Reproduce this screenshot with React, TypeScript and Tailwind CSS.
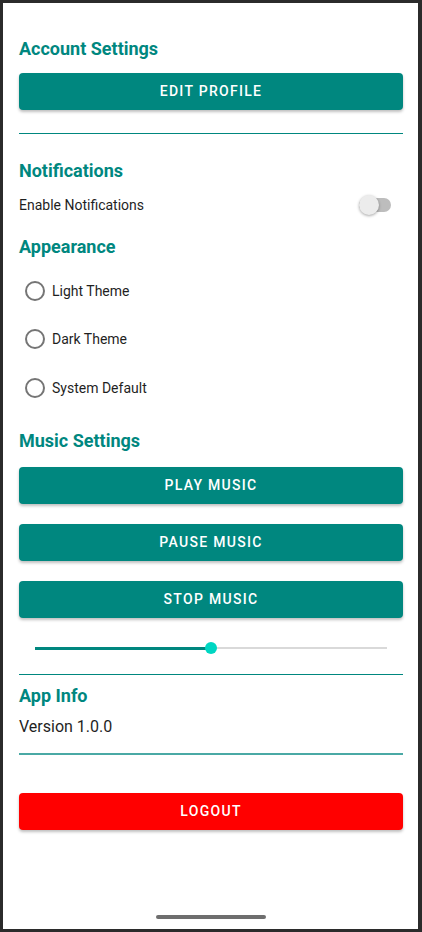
import { useState } from "react";

const teal = "bg-[#00877f]";

function ActionButton({ label, red }: { label: string; red?: boolean }) {
    return (
        <button
            className={`h-[37px] w-full rounded-[4px] text-[14px] font-medium tracking-[1.3px] text-white shadow-[0_2px_3px_rgba(0,0,0,0.25)] ${red ? "bg-[#ff0000]" : teal}`}
        >
            {label}
        </button>
    );
}

function Heading({ children, className = "" }: { children: string; className?: string }) {
    return <h2 className={`text-[18px] font-bold leading-[24px] text-[#00877f] ${className}`}>{children}</h2>;
}

export default function App() {
    const [theme, setTheme] = useState<string | null>(null);
    const [notify, setNotify] = useState(false);
    const volume = 50;

    return (
        <div className="h-[932px] w-full bg-[#2b2b2b] pt-[3px] pb-[3px] pl-[3px] pr-[4px] font-['Roboto',sans-serif]">
            <div className="flex h-full flex-col bg-white pl-[16px] pr-[15px] pt-[34px] pb-[10px]">
                <Heading>Account Settings</Heading>
                <div className="mt-[12px]">
                    <ActionButton label="EDIT PROFILE" />
                </div>
                <div className="mt-[23px] h-px bg-[#00877f]" />

                <Heading className="mt-[25px]">Notifications</Heading>
                <div className="mt-[10px] flex h-[24px] items-center justify-between pr-[12px]">
                    <span className="text-[14px] text-[#1f1f1f]">Enable Notifications</span>
                    <button onClick={() => setNotify(!notify)} className="relative h-[14px] w-[32px] rounded-full bg-[#bdbdbd]">
                        <span className="absolute -top-[3px] left-0 h-[20px] w-[20px] rounded-full bg-[#ececec] shadow-[0_1px_3px_rgba(0,0,0,0.35)]" />
                    </button>
                </div>

                <Heading className="mt-[18px]">Appearance</Heading>
                <div className="mt-[8px] flex flex-col">
                    {["Light Theme", "Dark Theme", "System Default"].map((t, i) => (
                        <label
                            key={t}
                            onClick={() => setTheme(t)}
                            className={`flex h-[48px] items-center gap-[7px] pl-[6px] ${i === 2 ? "mt-px" : ""}`}
                        >
                            <span className="flex h-[20px] w-[20px] items-center justify-center rounded-full border-2 border-[#757575]">
                                {theme === t && <span className="h-[10px] w-[10px] rounded-full bg-[#00877f]" />}
                            </span>
                            <span className="text-[14px] text-[#1f1f1f]">{t}</span>
                        </label>
                    ))}
                </div>

                <Heading className="mt-[17px]">Music Settings</Heading>
                <div className="mt-[14px] flex flex-col gap-[20px]">
                    <ActionButton label="PLAY MUSIC" />
                    <ActionButton label="PAUSE MUSIC" />
                    <ActionButton label="STOP MUSIC" />
                </div>
                <div className="mt-[18px] flex h-[24px] items-center px-[16px]">
                    <div className="relative h-[2px] w-full bg-[#d9d9d9]">
                        <div className="absolute left-0 top-[-0.5px] h-[3px] bg-[#00877f]" style={{ width: `${volume}%` }} />
                        <div
                            className="absolute top-[-5px] h-[12px] w-[12px] -translate-x-1/2 rounded-full bg-[#00d6c2]"
                            style={{ left: `${volume}%` }}
                        />
                    </div>
                </div>
                <div className="mt-[14px] h-px bg-[#00877f]" />

                <Heading className="mt-[9px]">App Info</Heading>
                <p className="mt-[7px] text-[16px] leading-[24px] text-[#1f1f1f]">Version 1.0.0</p>
                <div className="mt-[14px] h-[2px] bg-[#4aa9a5]" />

                <div className="mt-[38px]">
                    <ActionButton label="LOGOUT" red />
                </div>

                <div className="mt-auto flex justify-center">
                    <div className="h-[4px] w-[110px] rounded-full bg-[#6e6e6e]" />
                </div>
            </div>
        </div>
    );
}
